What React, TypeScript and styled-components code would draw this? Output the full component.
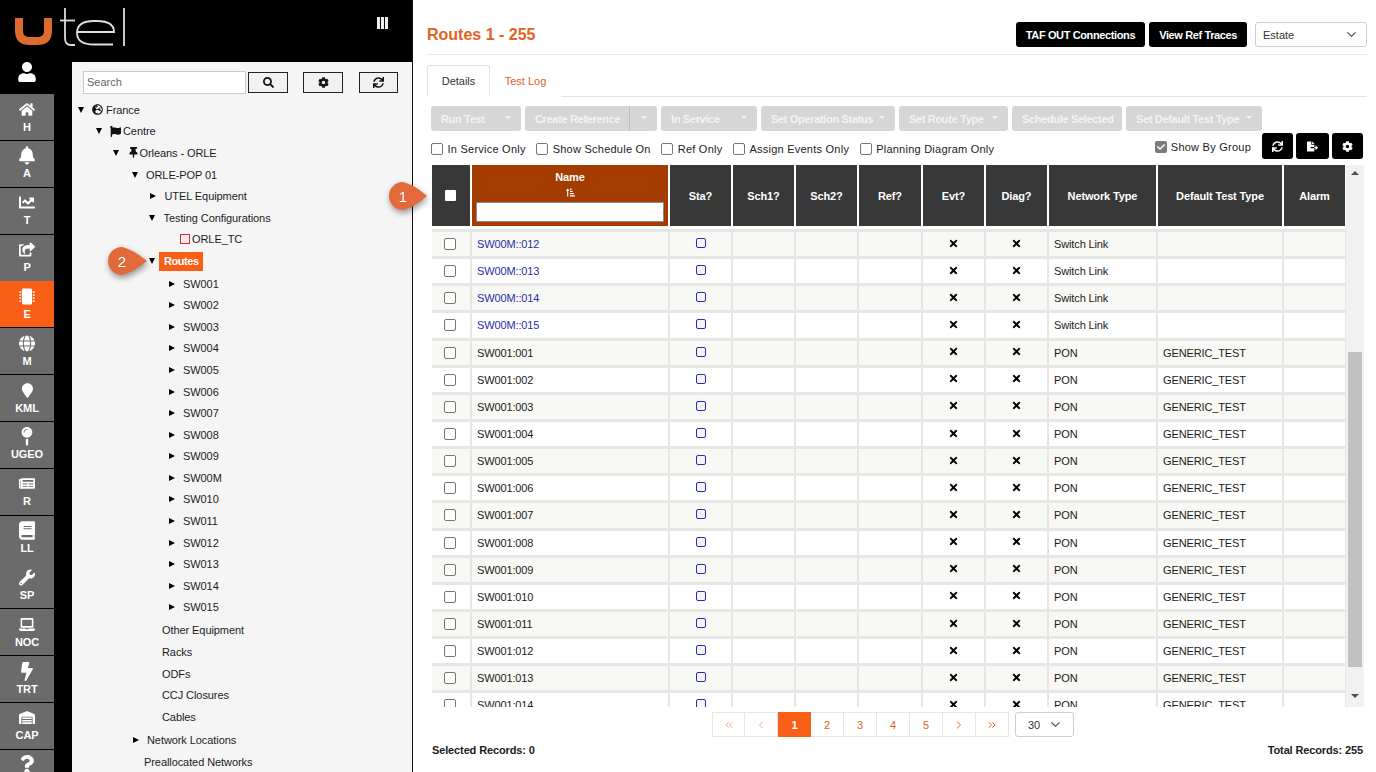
import React from "react";
import styled, { createGlobalStyle } from "styled-components";
import {
  FaHome, FaBell, FaChartLine, FaShareSquare, FaMicrochip, FaGlobe, FaMapMarker, FaMapPin, FaNewspaper, FaBook,
  FaWrench, FaLaptop, FaBolt, FaWarehouse, FaQuestion, FaUser, FaSearch, FaCog, FaSync, FaGlobeEurope,
  FaFlag, FaThumbtack, FaTimes, FaFileExport, FaSortAmountUpAlt, FaCheck,
} from "react-icons/fa";
import { LuChevronDown, LuChevronLeft, LuChevronRight, LuChevronsLeft, LuChevronsRight } from "react-icons/lu";

const Global = createGlobalStyle`
  html, body { margin: 0; padding: 0; height: 100%; overflow: hidden; background: #fff; }
  body { font-family: "Liberation Sans", Arial, sans-serif; font-size: 11px; color: #222; }
  * { box-sizing: border-box; }
`;

const Page = styled.div`
  position: relative;
  display: flex;
  width: 1376px;
  height: 772px;
  overflow: hidden;
`;

const Left = styled.aside`
  width: 413px;
  flex: none;
  display: flex;
  flex-direction: column;
  background: #000;
  border-right: 1px solid #111;
`;

const Brand = styled.div`
  height: 62px;
  flex: none;
  display: flex;
  align-items: flex-start;
  justify-content: space-between;
  padding-right: 24px;
`;

const Columns = styled.div`
  flex: 1;
  display: flex;
  min-height: 0;
`;

const Nav = styled.nav`
  width: 54px;
  flex: none;
  display: flex;
  flex-direction: column;
`;

const UserSlot = styled.div`
  height: 32px;
  flex: none;
  display: flex;
  align-items: flex-start;
  justify-content: center;
  color: #fff;
  font-size: 20px;
`;

const NavItem = styled.div<{ $active?: boolean }>`
  height: 46px;
  margin-bottom: 0.85px;
  flex: none;
  display: flex;
  flex-direction: column;
  align-items: center;
  padding-top: 5.5px;
  background: ${(p) => (p.$active ? "#f95f17" : "#6b6b6b")};
  color: #fff;
  font-size: 11px;
  font-weight: 700;
  line-height: 13px;
  letter-spacing: -0.1px;
  svg { font-size: 16px; height: 19px; margin-bottom: 2px; flex: none; }
`;

const TreePanel = styled.div`
  margin-left: 18px;
  flex: 1;
  background: #f5f5f5;
  padding: 9px 14px 0 0;
  overflow: hidden;
`;

const SearchBar = styled.div`
  display: flex;
  align-items: center;
  height: 22px;
  margin: 0 0 6px 11px;
`;

const SearchInput = styled.div`
  width: 163px;
  height: 23px;
  background: #fff;
  border: 1px solid #c9c9c9;
  color: #666;
  font-size: 11px;
  line-height: 21px;
  padding-left: 3px;
`;

const TreeButton = styled.button<{ $ml: number; $w: number }>`
  width: ${(p) => p.$w}px;
  height: 21px;
  margin-left: ${(p) => p.$ml}px;
  padding: 0;
  display: flex;
  align-items: center;
  justify-content: center;
  background: #f1f1f1;
  border: 1px solid #222;
  color: #111;
  font-size: 11px;
`;

const TreeRow = styled.div<{ $depth: number; $h?: number }>`
  display: flex;
  align-items: center;
  height: ${(p) => p.$h ?? 21.6}px;
  padding-left: ${(p) => p.$depth}px;
  font-size: 11px;
  letter-spacing: -0.08px;
  color: #1c1c1c;
  white-space: nowrap;
  svg { flex: none; }
`;

const Arrow = styled.span<{ $open?: boolean }>`
  width: 0;
  height: 0;
  flex: none;
  margin-right: 8.5px;
  ${(p) =>
    p.$open
      ? "border-left: 3.5px solid transparent; border-right: 3.5px solid transparent; border-top: 6px solid #000; margin-left: 0;"
      : "border-top: 3.5px solid transparent; border-bottom: 3.5px solid transparent; border-left: 6px solid #000; margin-left: 1px;"}
`;

const GlyphSlot = styled.span<{ $mr?: number }>`
  display: inline-flex;
  margin-right: ${(p) => p.$mr ?? 2}px;
  font-size: 11px;
  color: #111;
`;

const RedSquare = styled.span`
  width: 10px;
  height: 10px;
  flex: none;
  margin-right: 2px;
  border: 1px solid #d6283c;
  background: #fbe8ea;
`;

const Selected = styled.span`
  background: #f95f17;
  color: #fff;
  font-weight: 700;
  line-height: 19px;
  letter-spacing: -0.45px;
  padding: 0 4px 0 5px;
  margin-left: -4.5px;
`;

const Main = styled.main`
  flex: 1;
  min-width: 0;
  display: flex;
  flex-direction: column;
  padding: 0 9px 0 14px;
  background: #fff;
`;

const TopBar = styled.header`
  height: 55px;
  flex: none;
  display: flex;
  align-items: center;
  justify-content: space-between;
  border-bottom: 1px solid #e8e8e8;
  padding-top: 21px;
  padding-bottom: 6px;
`;

const Title = styled.h1`
  margin: 1px 0 0;
  font-size: 16px;
  font-weight: 700;
  color: #e2621e;
`;

const TopActions = styled.div`
  display: flex;
  align-items: center;
`;

const BlackButton = styled.button`
  height: 25px;
  padding: 0 10px;
  margin-right: 4px;
  background: #000;
  color: #fff;
  border: 0;
  border-radius: 3px;
  font: 700 11px "Liberation Sans", Arial, sans-serif;
  letter-spacing: -0.38px;
  white-space: nowrap;
`;

const SelectBox = styled.div<{ $w: number }>`
  width: ${(p) => p.$w}px;
  height: 25px;
  display: flex;
  align-items: center;
  justify-content: space-between;
  padding: 0 7px;
  background: #fff;
  border: 1px solid #cfcfcf;
  border-radius: 3px;
  color: #333;
  font-size: 11px;
  svg { font-size: 15px; color: #555; }
`;

const TopSelect = styled(SelectBox)`
  margin-left: 4px;
`;

const TabRow = styled.div`
  height: 42px;
  flex: none;
  padding-top: 10px;
  display: flex;
  align-items: flex-end;
  border-bottom: 1px solid #e2e2e2;
`;

const Tab = styled.div<{ $active?: boolean; $w: number }>`
  width: ${(p) => p.$w}px;
  height: 32px;
  display: flex;
  align-items: center;
  justify-content: center;
  font-size: 11px;
  margin-bottom: -1px;
  color: ${(p) => (p.$active ? "#333" : "#e2621e")};
  background: #fff;
  border: 1px solid ${(p) => (p.$active ? "#e2e2e2" : "transparent")};
  border-bottom-color: ${(p) => (p.$active ? "#fff" : "transparent")};
  border-radius: 3px 3px 0 0;
`;

const ActionRow = styled.div`
  display: flex;
  margin-top: 9px;
  margin-left: 4px;
  gap: 4px;
  height: 25px;
  flex: none;
`;

const GreyButton = styled.div<{ $w: number }>`
  width: ${(p) => p.$w}px;
  flex: none;
  display: flex;
  align-items: center;
  justify-content: space-between;
  padding: 0 10px;
  background: #d6d6d6;
  color: #f3f3f3;
  font-size: 11px;
  font-weight: 700;
  letter-spacing: -0.33px;
  border-radius: 3px;
  white-space: nowrap;
`;

const CaretDown = styled.span`
  width: 0;
  height: 0;
  margin-top: -2px;
  border-left: 3.5px solid transparent;
  border-right: 3.5px solid transparent;
  border-top: 3.5px solid #f3f3f3;
`;

const SplitDivider = styled.span`
  width: 1px;
  align-self: stretch;
  background: #bdbdbd;
  margin: 0 auto 0 9px;
`;

const FilterRow = styled.div`
  height: 34px;
  flex: none;
  display: flex;
  align-items: center;
  margin-left: 4px;
`;

const FilterLabel = styled.label<{ $mr: number }>`
  display: flex;
  align-items: center;
  margin-right: ${(p) => p.$mr}px;
  font-size: 11px;
  letter-spacing: 0.24px;
  color: #1c1c1c;
  white-space: nowrap;
  position: relative;
  top: 1px;
`;

const Box = styled.span`
  width: 12px;
  height: 12px;
  flex: none;
  margin-right: 4.5px;
  border: 1px solid #767676;
  border-radius: 2px;
  background: #fff;
`;

const CheckedBox = styled.span`
  width: 12px;
  height: 12px;
  flex: none;
  margin-right: 4px;
  background: #7b7b7b;
  border-radius: 2px;
  color: #fff;
  display: flex;
  align-items: center;
  justify-content: center;
  font-size: 8px;
`;

const RightTools = styled.div`
  margin-left: auto;
  margin-right: 4px;
  display: flex;
  align-items: center;
  gap: 3px;
  position: relative;
  top: -2px;
`;

const IconButton = styled.button<{ $w: number }>`
  width: ${(p) => p.$w}px;
  height: 26px;
  padding: 0;
  background: #000;
  color: #fff;
  border: 0;
  border-radius: 3px;
  font-size: 11px;
  display: flex;
  align-items: center;
  justify-content: center;
`;

const TableWrap = styled.div`
  height: 542px;
  flex: none;
  display: flex;
  margin-left: 5px;
`;

const TableClip = styled.div`
  width: 914px;
  flex: none;
  overflow: hidden;
`;

const COLS = "38px 196px 61px 61px 61px 62px 61px 61px 107px 124px 61px";

const HeadRow = styled.div`
  display: grid;
  grid-template-columns: ${COLS};
  gap: 2px;
  height: 61px;
  margin-bottom: 3px;
`;

const HeadCell = styled.div`
  background: #383838;
  color: #fff;
  font-weight: 700;
  font-size: 11px;
  letter-spacing: -0.13px;
  display: flex;
  flex-direction: column;
  align-items: center;
  justify-content: center;
`;

const NameHead = styled(HeadCell)`
  background: #a43c00;
  justify-content: flex-start;
  padding-top: 6px;
  line-height: 13px;
`;

const CheckHead = styled(HeadCell)`
  padding-right: 2px;
`;

const NameInput = styled.div`
  width: 188px;
  height: 20px;
  margin-top: 3px;
  background: #fff;
  border: 1px solid #8a8a8a;
`;

const SortGlyph = styled.span`
  font-size: 9px;
  height: 13px;
  margin-top: 2px;
  display: flex;
  align-items: center;
`;

const HeadBox = styled.span`
  width: 11px;
  height: 11px;
  background: #fff;
  border-radius: 1px;
`;

const Row = styled.div`
  display: grid;
  grid-template-columns: ${COLS};
  column-gap: 2px;
  height: 27.15px;
  border-top: 3px solid #e6e6e6;
  background: #e6e6e6;
`;

const Cell = styled.div<{ $alt?: boolean; $center?: boolean; $link?: boolean }>`
  background: ${(p) => (p.$alt ? "#f8f9f4" : "#fff")};
  display: flex;
  align-items: center;
  justify-content: ${(p) => (p.$center ? "center" : "flex-start")};
  padding: ${(p) => (p.$center ? "0" : "0 5px")};
  font-size: 11px;
  letter-spacing: -0.13px;
  color: ${(p) => (p.$link ? "#2a2ca8" : "#1a1a1a")};
  white-space: nowrap;
`;

const CheckCell = styled(Cell)`
  padding-right: 2px;
`;

const RowBox = styled.span`
  width: 12px;
  height: 12px;
  border: 1px solid #767676;
  border-radius: 2px;
  background: #fff;
`;

const StatusBox = styled.span`
  width: 10px;
  height: 10px;
  margin-top: -2px;
  border: 1px solid #2a2ca8;
  border-radius: 2px;
  background: #f4f4ff;
`;

const XIcon = styled(FaTimes)`
  font-size: 11px;
  margin-top: -2px;
  color: #000;
`;

const ScrollTrack = styled.div`
  width: 18px;
  flex: none;
  background: #f1f1f1;
  display: flex;
  flex-direction: column;
  align-items: center;
`;

const ScrollUp = styled.span`
  margin-top: 6px;
  width: 0;
  height: 0;
  border-left: 4px solid transparent;
  border-right: 4px solid transparent;
  border-bottom: 4px solid #505050;
`;

const ScrollThumb = styled.span`
  width: 14px;
  height: 315px;
  margin-top: 177px;
  background: #c1c1c1;
`;

const ScrollDown = styled.span`
  margin-top: 27px;
  width: 0;
  height: 0;
  border-left: 4px solid transparent;
  border-right: 4px solid transparent;
  border-top: 4px solid #505050;
`;

const PagerRow = styled.div`
  height: 31px;
  margin-top: 5px;
  flex: none;
  display: flex;
  justify-content: center;
  align-items: flex-start;
  padding-right: 8px;
`;

const PageCell = styled.div<{ $active?: boolean; $muted?: boolean }>`
  width: 33px;
  height: 25px;
  display: flex;
  align-items: center;
  justify-content: center;
  border: 1px solid #e6e6e6;
  border-left-width: ${(p) => (p.$active ? "1px" : "0")};
  background: ${(p) => (p.$active ? "#f95f17" : "#fff")};
  border-color: ${(p) => (p.$active ? "#f95f17" : "#e6e6e6")};
  color: ${(p) => (p.$active ? "#fff" : p.$muted ? "#f0a987" : "#e2621e")};
  font-size: 11px;
  font-weight: ${(p) => (p.$active ? 700 : 400)};
  svg { font-size: 12px; }
`;

const FirstCell = styled(PageCell)`
  border-left-width: 1px;
`;

const PageSize = styled(SelectBox)`
  margin-left: 6px;
  padding: 0 10px 0 12px;
`;

const FooterRow = styled.div`
  display: flex;
  justify-content: space-between;
  margin: 0 4px 0 5px;
  font-weight: 700;
  font-size: 11px;
  letter-spacing: -0.13px;
  color: #1c1c1c;
  padding-top: 1px;
`;

const Callout = styled.div<{ $x: number; $y: number }>`
  position: absolute;
  left: ${(p) => p.$x}px;
  top: ${(p) => p.$y}px;
  height: 28px;
  filter: drop-shadow(1px 3px 3px rgba(0, 0, 0, 0.4));
  svg { display: block; }
`;

const CalloutNumber = styled.span`
  position: absolute;
  left: 0;
  top: 0;
  width: 28px;
  height: 28px;
  display: flex;
  align-items: center;
  justify-content: center;
  color: #fff;
  font-size: 15px;
`;

const BarsIcon = styled.div`
  display: flex;
  gap: 1px;
  margin-top: 17px;
  span { width: 3px; height: 12px; background: #eee; display: block; }
`;

const Logo = () => (
  <svg width="130" height="50" viewBox="0 0 130 50" aria-label="utel" role="img">
    <path d="M19 18 V31 Q19 41 30 41 H37 Q48 41 48 31 V18" fill="none" stroke="#dd6a2e" strokeWidth="8" />
    <g fill="none" stroke="#dedede" strokeWidth="1.8">
      <path d="M65 8 V38 Q65 45 71 45 H75" />
      <path d="M60 20.5 H75" />
      <path d="M77 32 H114 Q114 21 97 21 H94 Q77 21 77 33 Q77 44.5 94 44.5 H113" />
      <path d="M124 8 V46" />
    </g>
  </svg>
);

const CalloutShape = ({ w }: { w: number }) => (
  <svg width={w} height="28" viewBox={`0 0 ${w} 28`}>
    <path d={`M14 0 A14 14 0 1 0 14 28 Q24 26 ${w} 14 Q24 2 14 0 Z`} fill="#e2693a" />
  </svg>
);

const navItems: [React.ReactNode, string, boolean?][] = [
  [<FaHome />, "H"], [<FaBell />, "A"], [<FaChartLine />, "T"], [<FaShareSquare />, "P"],
  [<FaMicrochip />, "E", true], [<FaGlobe />, "M"], [<FaMapMarker size={11} />, "KML"], [<FaMapPin />, "UGEO"],
  [<FaNewspaper />, "R"], [<FaBook />, "LL"], [<FaWrench />, "SP"], [<FaLaptop />, "NOC"],
  [<FaBolt />, "TRT"], [<FaWarehouse />, "CAP"], [<FaQuestion />, ""],
];

const switches = ["SW001","SW002","SW003","SW004","SW005","SW006","SW007","SW008","SW009","SW00M","SW010","SW011","SW012","SW013","SW014","SW015"];

const names = [
  "SW00M::012", "SW00M::013", "SW00M::014", "SW00M::015",
  ...Array.from({ length: 14 }, (_, i) => `SW001:${String(i + 1).padStart(3, "0")}`),
];

const heads = ["Sta?", "Sch1?", "Sch2?", "Ref?", "Evt?", "Diag?", "Network Type", "Default Test Type", "Alarm"];

export default function App() {
  return (
    <Page>
      <Global />
      <Left>
        <Brand>
          <Logo />
          <BarsIcon><span /><span /><span /></BarsIcon>
        </Brand>
        <Columns>
          <Nav>
            <UserSlot><FaUser /></UserSlot>
            {navItems.map(([icon, label, active], i) => (
              <NavItem key={i} $active={active}>{icon}{label}</NavItem>
            ))}
          </Nav>
          <TreePanel>
            <SearchBar>
              <SearchInput>Search</SearchInput>
              <TreeButton $ml={2} $w={40}><FaSearch /></TreeButton>
              <TreeButton $ml={15} $w={40}><FaCog /></TreeButton>
              <TreeButton $ml={16} $w={39}><FaSync /></TreeButton>
            </SearchBar>
            <TreeRow $depth={5.5}><Arrow $open /><GlyphSlot $mr={3}><FaGlobeEurope /></GlyphSlot>France</TreeRow>
            <TreeRow $depth={23.5}><Arrow $open /><GlyphSlot $mr={2}><FaFlag /></GlyphSlot>Centre</TreeRow>
            <TreeRow $depth={41}><Arrow $open /><GlyphSlot $mr={1}><FaThumbtack /></GlyphSlot>Orleans - ORLE</TreeRow>
            <TreeRow $depth={59.5}><Arrow $open />ORLE-POP 01</TreeRow>
            <TreeRow $depth={77}><Arrow />UTEL Equipment</TreeRow>
            <TreeRow $depth={77}><Arrow $open />Testing Configurations</TreeRow>
            <TreeRow $depth={108}><RedSquare />ORLE_TC</TreeRow>
            <TreeRow $depth={77} $h={22.6}><Arrow $open /><Selected>Routes</Selected></TreeRow>
            {switches.map((s) => (
              <TreeRow key={s} $depth={95.5}><Arrow />{s}</TreeRow>
            ))}
            <TreeRow $depth={90} $h={23}>Other Equipment</TreeRow>
            <TreeRow $depth={90}>Racks</TreeRow>
            <TreeRow $depth={90}>ODFs</TreeRow>
            <TreeRow $depth={90}>CCJ Closures</TreeRow>
            <TreeRow $depth={90}>Cables</TreeRow>
            <TreeRow $depth={59.5} $h={24}><Arrow />Network Locations</TreeRow>
            <TreeRow $depth={72} $h={20}>Preallocated Networks</TreeRow>
          </TreePanel>
        </Columns>
      </Left>
      <Main>
        <TopBar>
          <Title>Routes 1 - 255</Title>
          <TopActions>
            <BlackButton>TAF OUT Connections</BlackButton>
            <BlackButton>View Ref Traces</BlackButton>
            <TopSelect $w={112}>Estate<LuChevronDown /></TopSelect>
          </TopActions>
        </TopBar>
        <TabRow>
          <Tab $active $w={63}>Details</Tab>
          <Tab $w={71}>Test Log</Tab>
        </TabRow>
        <ActionRow>
          <GreyButton $w={90}>Run Test<CaretDown /></GreyButton>
          <GreyButton $w={132}>Create Reference<SplitDivider /><CaretDown /></GreyButton>
          <GreyButton $w={96}>In Service<CaretDown /></GreyButton>
          <GreyButton $w={134}>Set Operation Status<CaretDown /></GreyButton>
          <GreyButton $w={109}>Set Route Type<CaretDown /></GreyButton>
          <GreyButton $w={110}>Schedule Selected</GreyButton>
          <GreyButton $w={136}>Set Default Test Type<CaretDown /></GreyButton>
        </ActionRow>
        <FilterRow>
          <FilterLabel $mr={10.5}><Box />In Service Only</FilterLabel>
          <FilterLabel $mr={10.5}><Box />Show Schedule On</FilterLabel>
          <FilterLabel $mr={10.5}><Box />Ref Only</FilterLabel>
          <FilterLabel $mr={10.5}><Box />Assign Events Only</FilterLabel>
          <FilterLabel $mr={0}><Box />Planning Diagram Only</FilterLabel>
          <RightTools>
            <FilterLabel $mr={8}><CheckedBox><FaCheck /></CheckedBox>Show By Group</FilterLabel>
            <IconButton $w={31}><FaSync /></IconButton>
            <IconButton $w={33}><FaFileExport /></IconButton>
            <IconButton $w={31}><FaCog /></IconButton>
          </RightTools>
        </FilterRow>
        <TableWrap>
          <TableClip>
            <HeadRow>
              <CheckHead><HeadBox /></CheckHead>
              <NameHead>
                Name
                <SortGlyph><FaSortAmountUpAlt /></SortGlyph>
                <NameInput />
              </NameHead>
              {heads.map((h) => <HeadCell key={h}>{h}</HeadCell>)}
            </HeadRow>
            {names.map((name, i) => {
              const alt = i % 2 === 0;
              const sw = i < 4;
              return (
                <Row key={name}>
                  <CheckCell $alt={alt} $center><RowBox /></CheckCell>
                  <Cell $alt={alt} $link={sw}>{name}</Cell>
                  <Cell $alt={alt} $center><StatusBox /></Cell>
                  <Cell $alt={alt} />
                  <Cell $alt={alt} />
                  <Cell $alt={alt} />
                  <Cell $alt={alt} $center><XIcon /></Cell>
                  <Cell $alt={alt} $center><XIcon /></Cell>
                  <Cell $alt={alt}>{sw ? "Switch Link" : "PON"}</Cell>
                  <Cell $alt={alt}>{sw ? "" : "GENERIC_TEST"}</Cell>
                  <Cell $alt={alt} />
                </Row>
              );
            })}
          </TableClip>
          <ScrollTrack>
            <ScrollUp />
            <ScrollThumb />
            <ScrollDown />
          </ScrollTrack>
        </TableWrap>
        <PagerRow>
          <FirstCell $muted><LuChevronsLeft /></FirstCell>
          <PageCell $muted><LuChevronLeft /></PageCell>
          <PageCell $active>1</PageCell>
          <PageCell>2</PageCell>
          <PageCell>3</PageCell>
          <PageCell>4</PageCell>
          <PageCell>5</PageCell>
          <PageCell><LuChevronRight /></PageCell>
          <PageCell><LuChevronsRight /></PageCell>
          <PageSize $w={59}>30<LuChevronDown /></PageSize>
        </PagerRow>
        <FooterRow>
          <span>Selected Records: 0</span>
          <span>Total Records: 255</span>
        </FooterRow>
      </Main>
      <Callout $x={389} $y={182}>
        <CalloutShape w={38} />
        <CalloutNumber>1</CalloutNumber>
      </Callout>
      <Callout $x={108} $y={247}>
        <CalloutShape w={39} />
        <CalloutNumber>2</CalloutNumber>
      </Callout>
    </Page>
  );
}
